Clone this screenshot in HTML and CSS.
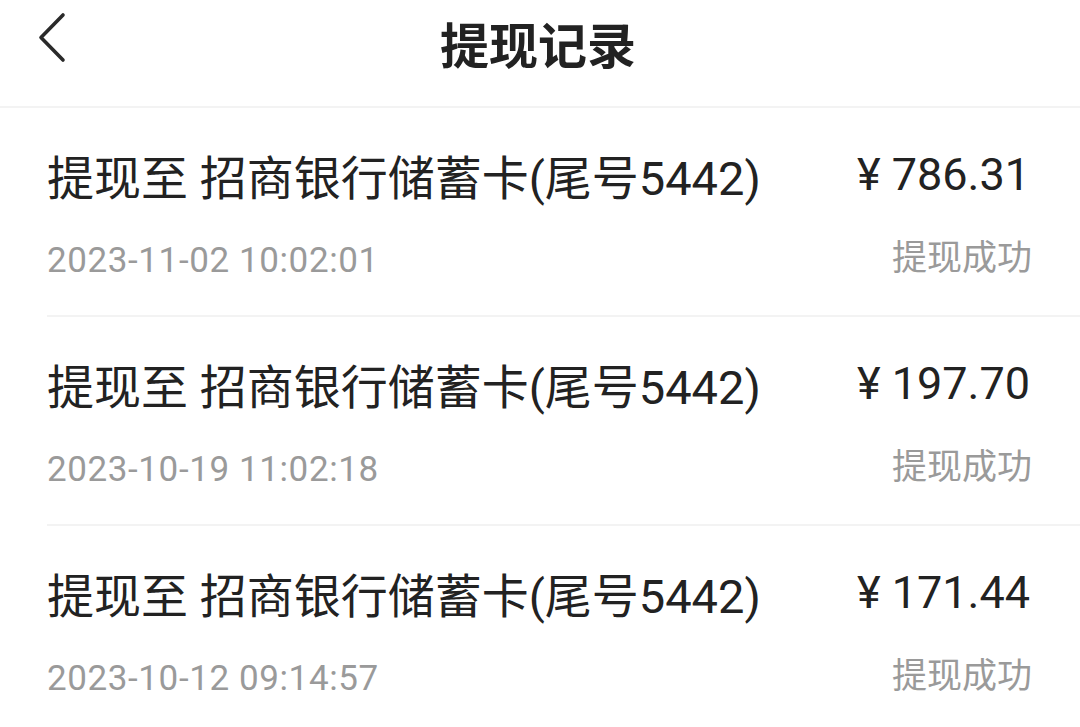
FILE: index.html
```html
<!DOCTYPE html>
<html lang="zh-CN">
<head>
<meta charset="utf-8">
<title>提现记录</title>
<link rel="stylesheet" href="styles.css">
</head>
<body>
<div class="page">
  <header class="nav">
    <span class="back">
      <svg width="30" height="52" viewBox="0 0 30 52"><path d="M25 3 L3 25.5 L25 48" fill="none" stroke="#2a2a2a" stroke-width="3.6" stroke-linecap="round" stroke-linejoin="round"/></svg>
    </span>
    <h1 class="title">提现记录</h1>
  </header>
  <ul class="list">
    <li class="item">
      <div class="left">
        <div class="desc">提现至 招商银行储蓄卡(尾号5442)</div>
        <div class="time">2023-11-02 10:02:01</div>
      </div>
      <div class="right">
        <div class="amount">¥ 786.31</div>
        <div class="status">提现成功</div>
      </div>
    </li>
    <li class="item">
      <div class="left">
        <div class="desc">提现至 招商银行储蓄卡(尾号5442)</div>
        <div class="time">2023-10-19 11:02:18</div>
      </div>
      <div class="right">
        <div class="amount">¥ 197.70</div>
        <div class="status">提现成功</div>
      </div>
    </li>
    <li class="item">
      <div class="left">
        <div class="desc">提现至 招商银行储蓄卡(尾号5442)</div>
        <div class="time">2023-10-12 09:14:57</div>
      </div>
      <div class="right">
        <div class="amount">¥ 171.44</div>
        <div class="status">提现成功</div>
      </div>
    </li>
  </ul>
</div>
</body>
</html>
```

FILE: styles.css
```css
* { box-sizing: border-box; margin: 0; padding: 0; }
html, body { background: #fff; }
body {
  font-family: Roboto, "Noto Sans CJK SC", sans-serif;
  color: #222;
  width: 1080px;
  height: 727px;
  overflow: hidden;
}
.page { width: 1080px; }
.nav {
  height: 108px;
  position: relative;
  display: flex;
  align-items: center;
  justify-content: center;
  border-bottom: 2px solid #f3f3f3;
}
.back {
  position: absolute;
  left: 38px;
  top: 12px;
  display: block;
}
.back svg { display: block; }
.title {
  font-family: "Noto Sans CJK SC", sans-serif;
  font-size: 49px;
  font-weight: 700;
  color: #222;
  margin-top: -22px;
  margin-left: -4px;
}
.list { list-style: none; padding-left: 47px; }
.item {
  height: 209px;
  display: flex;
  justify-content: space-between;
  padding-right: 50px;
  border-bottom: 2px solid #f3f3f3;
}
.item:last-child { border-bottom: none; }
.left, .right { display: flex; flex-direction: column; }
.right { align-items: flex-end; }
.desc {
  font-size: 47px;
  line-height: 60px;
  margin-top: 41px;
  color: #222;
}
.time {
  font-size: 35px;
  line-height: 40px;
  margin-top: 32px;
  letter-spacing: 0.6px;
  color: #9a9a9a;
}
.amount {
  font-size: 45px;
  line-height: 56px;
  margin-top: 39px;
  color: #222;
}
.status {
  font-family: "Noto Sans CJK SC", sans-serif;
  font-size: 35px;
  line-height: 40px;
  margin-top: 32px;
  margin-right: -2px;
  color: #9a9a9a;
}
```
